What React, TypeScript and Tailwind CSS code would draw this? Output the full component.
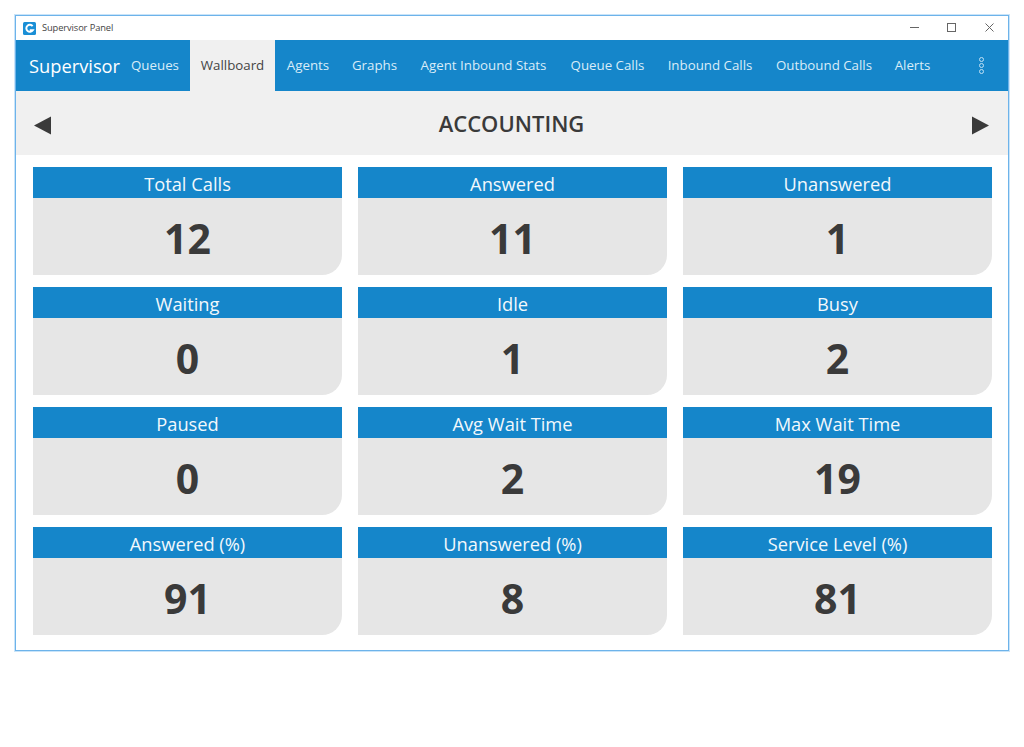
import React from "react";

const tabs: [string, string][] = [
  ["Queues", "w-[70px]"],
  ["Wallboard", "w-[85px]"],
  ["Agents", "w-[66px]"],
  ["Graphs", "w-[67px]"],
  ["Agent Inbound Stats", "w-[151px]"],
  ["Queue Calls", "w-[97px]"],
  ["Inbound Calls", "w-[108px]"],
  ["Outbound Calls", "w-[120px]"],
  ["Alerts", "w-[57px]"],
];
const cards: [string, string][] = [
  ["Total Calls", "12"], ["Answered", "11"], ["Unanswered", "1"],
  ["Waiting", "0"], ["Idle", "1"], ["Busy", "2"],
  ["Paused", "0"], ["Avg Wait Time", "2"], ["Max Wait Time", "19"],
  ["Answered (%)", "91"], ["Unanswered (%)", "8"], ["Service Level (%)", "81"],
];

export default function App() {
  return (
    <div className="w-[1024px] h-[747px] bg-white pt-[15px] pl-[15px] font-['Open_Sans','Noto_Sans',sans-serif]">
      <div className="w-[994px] h-[636px] border border-solid border-[#6db3ea] shadow-[0_0_0_1px_#c9e4f9] flex flex-col bg-white">
        <div className="h-[24px] flex items-center pl-[7px] shrink-0">
          <svg width="13" height="13" viewBox="0 0 13 13">
            <rect width="13" height="13" rx="1.5" fill="#1a8fd6" />
            <path d="M9.6 4.2A3.5 3.5 0 1 0 9.8 8.2H6.8" fill="none" stroke="#fff" strokeWidth="2" />
          </svg>
          <span className="ml-[6px] text-[9.3px] text-[#444] tracking-[-0.1px]">Supervisor Panel</span>
          <div className="ml-auto flex items-center">
            <svg width="9" height="10" viewBox="0 0 9 10" className="mr-[28px]"><path d="M0 4.5h9" stroke="#666" strokeWidth="1" /></svg>
            <svg width="9" height="10" viewBox="0 0 9 10" className="mr-[29px]"><rect x="0.5" y="0.5" width="8" height="8" fill="none" stroke="#666" strokeWidth="1" /></svg>
            <svg width="9" height="10" viewBox="0 0 9 10" className="mr-[14px]"><path d="M0.5 0.5l8 8M8.5 0.5l-8 8" stroke="#666" strokeWidth="1" /></svg>
          </div>
        </div>
        <div className="h-[51px] bg-[#1586ca] flex items-stretch pl-[13px] shrink-0 text-white">
          <div className="flex items-center text-[18.3px] font-normal w-[91px] whitespace-nowrap pt-[1px]">Supervisor</div>
          {tabs.map(([t, w]) => (
            <div
              key={t}
              className={`${w} flex items-center justify-center text-[13.3px] whitespace-nowrap pt-[1px] ${t === "Wallboard" ? "bg-[#f0f0f0] text-[#444]" : "text-[#d9ecf8]"}`}
            >
              {t}
            </div>
          ))}
          <div className="ml-auto mr-[24px] flex flex-col justify-center gap-[1px]">
            <span className="w-[5px] h-[5px] rounded-full border border-[#bfe0f5]" />
            <span className="w-[5px] h-[5px] rounded-full border border-[#bfe0f5]" />
            <span className="w-[5px] h-[5px] rounded-full border border-[#bfe0f5]" />
          </div>
        </div>
        <div className="h-[64px] bg-[#f0f0f0] flex items-center justify-between pl-[18px] pr-[19px] shrink-0">
          <svg width="17" height="19" viewBox="0 0 17 19" className="mt-[4px]"><path d="M0 9.5L17 0.5V18.5Z" fill="#3a3a3a" /></svg>
          <div className="text-[22px] font-semibold text-[#3a3a3a]">ACCOUNTING</div>
          <svg width="17" height="19" viewBox="0 0 17 19" className="mt-[4px]"><path d="M17 9.5L0 0.5V18.5Z" fill="#3a3a3a" /></svg>
        </div>
        <div className="grid grid-cols-3 gap-x-[16px] gap-y-[12px] pt-[12px] pl-[17px] pr-[16px]">
          {cards.map(([label, value]) => (
            <div key={label} className="h-[108px] bg-[#e6e6e6] rounded-br-[20px] flex flex-col overflow-hidden">
              <div className="h-[31px] shrink-0 bg-[#1586ca] text-[#f2f8fc] text-[18.3px] flex items-center justify-center pt-[2px] whitespace-nowrap">{label}</div>
              <div className="flex-1 flex items-center justify-center text-[41px] font-bold text-[#3a3a3a] pt-[5px]">{value}</div>
            </div>
          ))}
        </div>
      </div>
    </div>
  );
}
